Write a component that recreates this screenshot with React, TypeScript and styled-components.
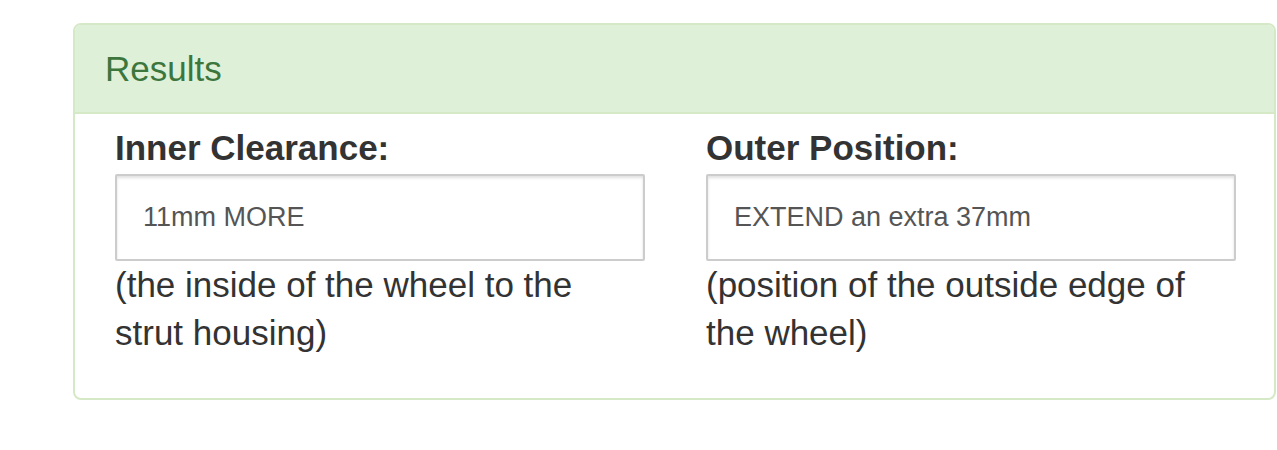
import styled, { createGlobalStyle } from 'styled-components';

const GlobalStyle = createGlobalStyle`
  body {
    margin: 0;
    background: #ffffff;
    font-family: "Liberation Sans", Arial, Helvetica, sans-serif;
    color: #333333;
  }
`;

const Page = styled.div`
  padding: 23px 1px 0 73px;
`;

const Panel = styled.section`
  border: 2px solid #d6e9c6;
  border-radius: 8px;
  background: #ffffff;
  overflow: hidden;
`;

const PanelHeading = styled.header`
  background: #dff0d8;
  border-bottom: 2px solid #d6e9c6;
  padding: 25px 30px 23px;
`;

const PanelTitle = styled.h3`
  margin: 0;
  font-size: 35px;
  font-weight: normal;
  line-height: 1.1;
  color: #3c763d;
`;

const PanelBody = styled.div`
  display: grid;
  grid-template-columns: 1fr 1fr;
  column-gap: 61px;
  padding: 15px 38px 41px 40px;
`;

const Field = styled.div`
  display: flex;
  flex-direction: column;
`;

const Label = styled.label`
  font-size: 35px;
  font-weight: bold;
  line-height: 1.1;
  margin-bottom: 7px;
`;

const Output = styled.div`
  display: flex;
  align-items: center;
  height: 87px;
  box-sizing: border-box;
  padding: 0 26px;
  border: 2px solid #cccccc;
  border-radius: 2px;
  box-shadow: inset 0 2px 3px rgba(0, 0, 0, 0.12);
  font-size: 27px;
  color: #555555;
`;

const Help = styled.p`
  margin: 0;
  font-size: 35px;
  line-height: 48px;
`;

const results = [
  {
    label: 'Inner Clearance:',
    value: '11mm MORE',
    help: '(the inside of the wheel to the strut housing)',
  },
  {
    label: 'Outer Position:',
    value: 'EXTEND an extra 37mm',
    help: '(position of the outside edge of the wheel)',
  },
];

export default function App() {
  return (
    <>
      <GlobalStyle />
      <Page>
        <Panel>
          <PanelHeading>
            <PanelTitle>Results</PanelTitle>
          </PanelHeading>
          <PanelBody>
            {results.map((r) => (
              <Field key={r.label}>
                <Label>{r.label}</Label>
                <Output>{r.value}</Output>
                <Help>{r.help}</Help>
              </Field>
            ))}
          </PanelBody>
        </Panel>
      </Page>
    </>
  );
}
